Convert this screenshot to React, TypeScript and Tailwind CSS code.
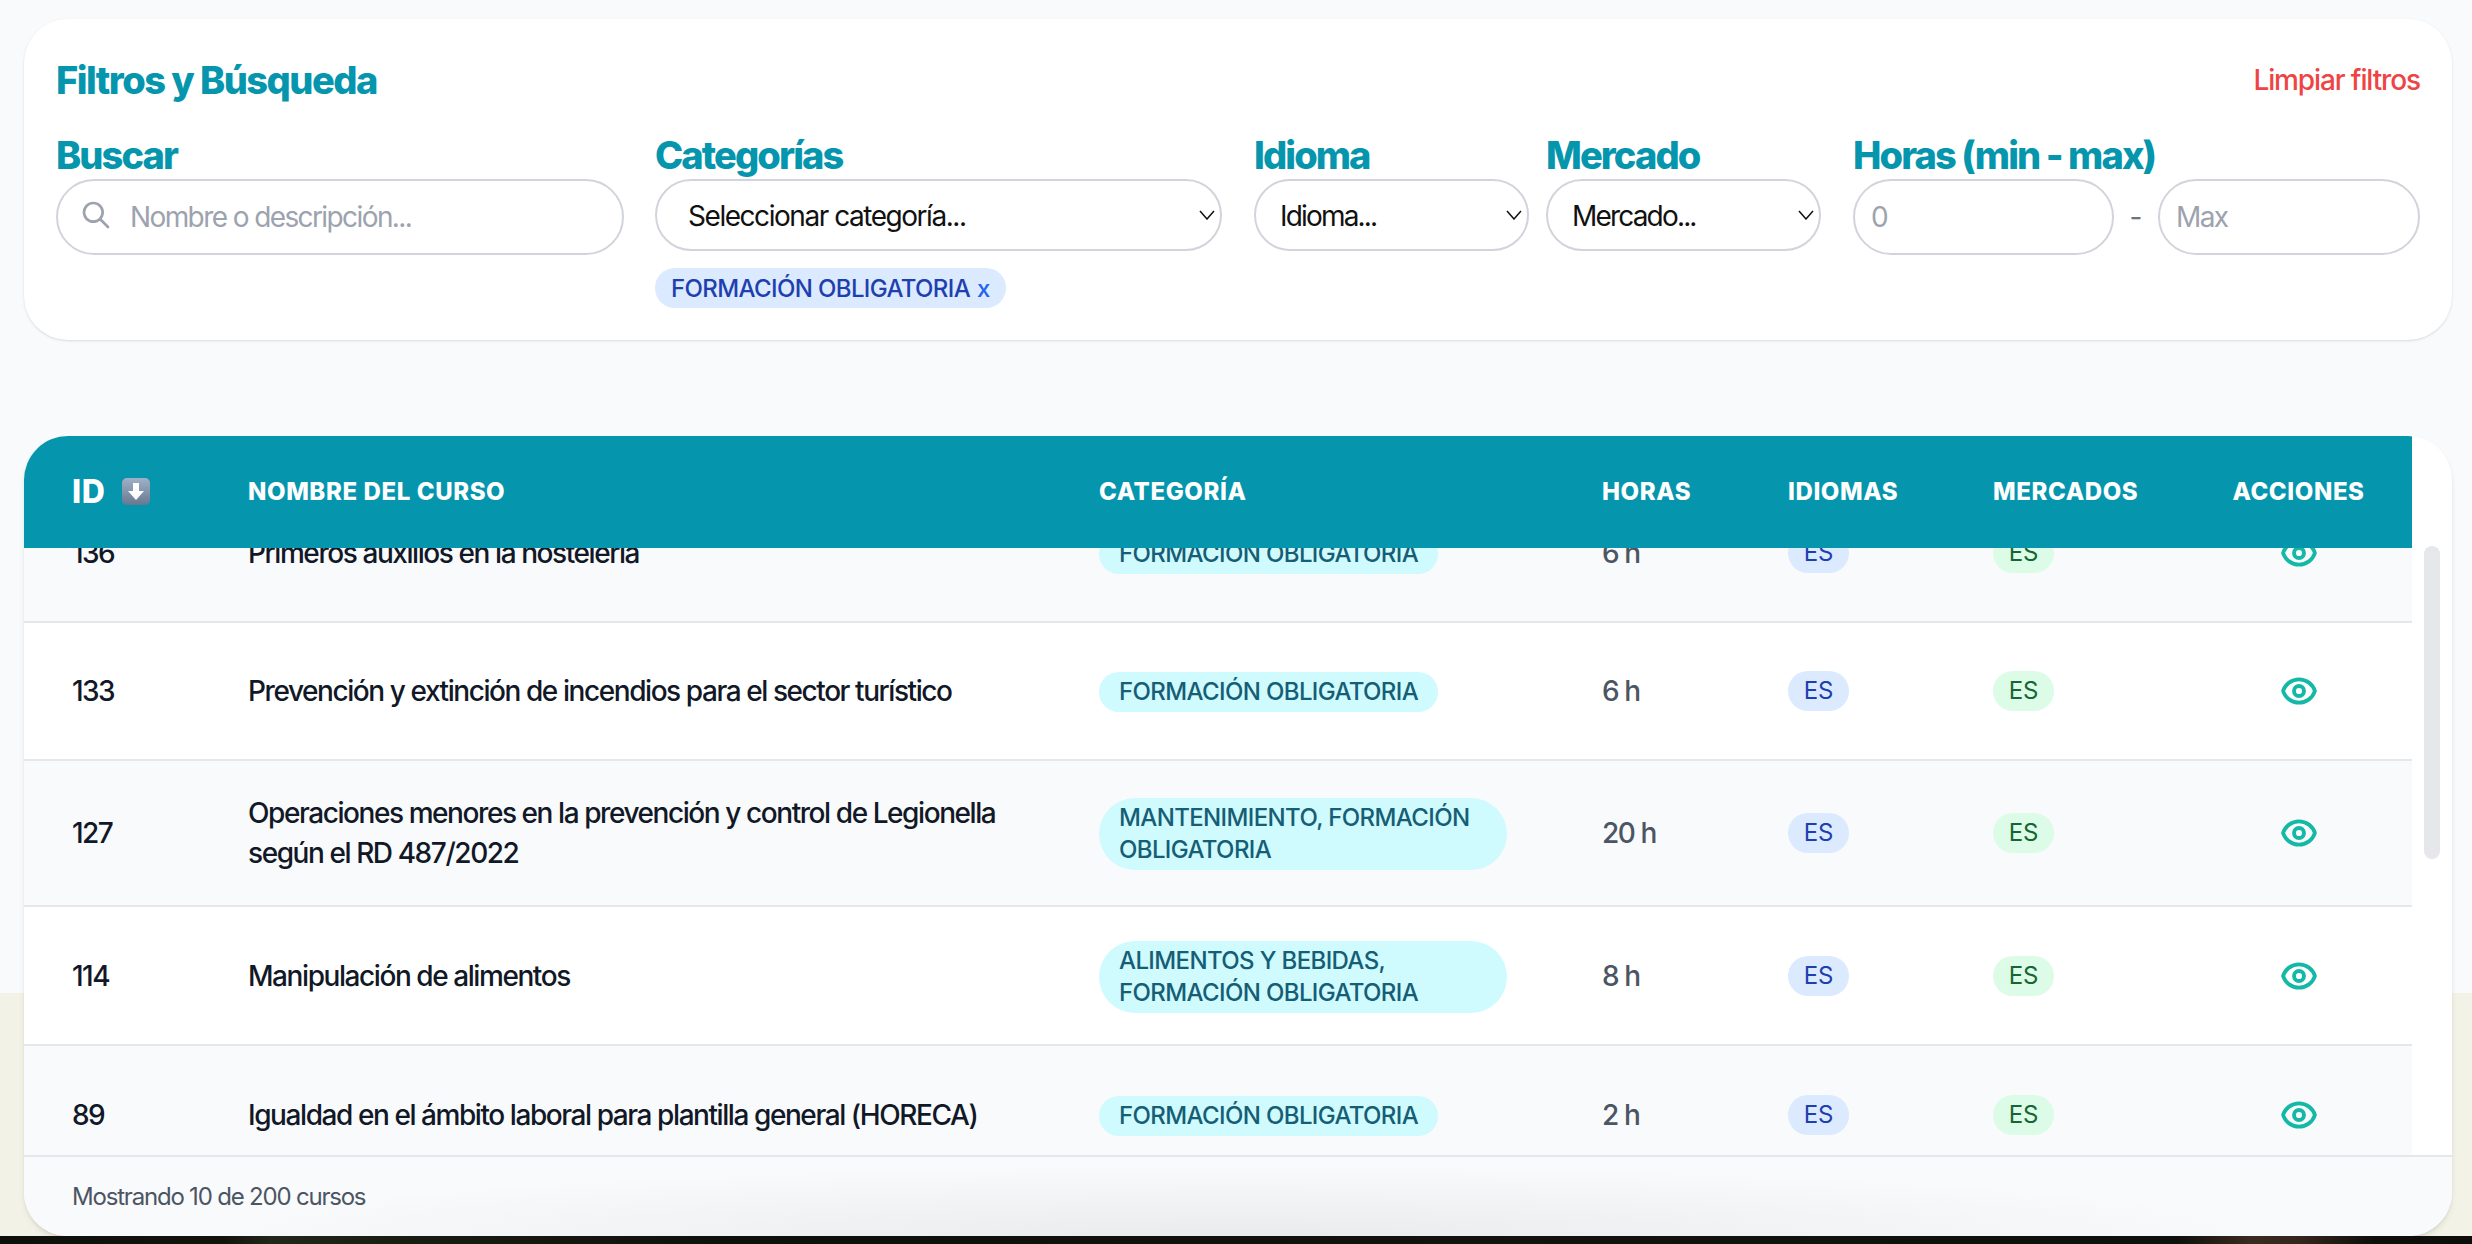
import { ReactNode } from "react";

const gridCols = "grid grid-cols-[176px_851px_503px_186px_205px_240px_227px] items-center";

const courses = [
  { id: 136, name: "Primeros auxilios en la hostelería", cat: "FORMACIÓN OBLIGATORIA", hours: "6 h", rowH: "h-[137px]" },
  { id: 133, name: "Prevención y extinción de incendios para el sector turístico", cat: "FORMACIÓN OBLIGATORIA", hours: "6 h", rowH: "h-[136px]" },
  { id: 127, name: "Operaciones menores en la prevención y control de Legionella según el RD 487/2022", cat: "MANTENIMIENTO, FORMACIÓN OBLIGATORIA", hours: "20 h", rowH: "h-[144px]" },
  { id: 114, name: "Manipulación de alimentos", cat: "ALIMENTOS Y BEBIDAS, FORMACIÓN OBLIGATORIA", hours: "8 h", rowH: "h-[137px]" },
  { id: 89, name: "Igualdad en el ámbito laboral para plantilla general (HORECA)", cat: "FORMACIÓN OBLIGATORIA", hours: "2 h", rowH: "h-[137px]" },
];

const SearchIcon = () => (
  <svg className="w-8 h-8 text-[#9ca3af]" fill="none" viewBox="0 0 24 24" stroke="currentColor" strokeWidth={2}>
    <path strokeLinecap="round" strokeLinejoin="round" d="M21 21l-6-6m2-5a7 7 0 11-14 0 7 7 0 0114 0z" />
  </svg>
);

const EyeIcon = () => (
  <svg className="w-10 h-10 text-[#14b8a6]" fill="none" viewBox="0 0 24 24" stroke="currentColor" strokeWidth={2.3}>
    <path strokeLinecap="round" strokeLinejoin="round" d="M15 12a3 3 0 11-6 0 3 3 0 016 0z" />
    <path
      strokeLinecap="round"
      strokeLinejoin="round"
      d="M2.458 12C3.732 7.943 7.523 5 12 5c4.478 0 8.268 2.943 9.542 7-1.274 4.057-5.064 7-9.542 7-4.477 0-8.268-2.943-9.542-7z"
    />
  </svg>
);

// the emoji arrow next to ID
const SortIcon = () => (
  <svg className="w-[28px] h-[28px]" viewBox="0 0 28 28">
    <defs>
      <linearGradient id="sortBg" x1="0" y1="0" x2="0" y2="1">
        <stop offset="0" stopColor="#9fb0c8" />
        <stop offset="1" stopColor="#67788f" />
      </linearGradient>
    </defs>
    <rect x="0" y="0" width="28" height="27" rx="5" fill="url(#sortBg)" />
    <path d="M11 5h6v8h5l-8 9-8-9h5z" fill="#fff" />
  </svg>
);

const Label = ({ children }: { children: ReactNode }) => (
  <label className="block h-[44px] text-[38px] leading-[40px] font-extrabold text-[#0596ae] tracking-[-0.05em] whitespace-nowrap">
    {children}
  </label>
);

const selectClass =
  "appearance-none h-[72px] w-full bg-white border-2 border-[#d1d5db] rounded-full text-[28px] text-[#111111] pt-[2px] outline-none";

const inputClass =
  "h-[76px] bg-white border-2 border-[#d1d5db] rounded-full text-[28px] tracking-[-0.057em] outline-none placeholder:text-[#9ca3af]";

const Chevron = () => (
  <svg className="absolute right-[7px] top-[31px] w-[16px] h-[10px] text-[#111111]" viewBox="0 0 16 10" fill="none" stroke="currentColor" strokeWidth={1.5}>
    <path d="M1 1l7 8 7-8" />
  </svg>
);

const Badge = ({ className, children }: { className: string; children: ReactNode }) => (
  <span className={`inline-flex items-center justify-center h-[40px] w-[61px] rounded-full text-[24px] tracking-[-0.01em] ${className}`}>
    {children}
  </span>
);

export default function App() {
  return (
    <div className="h-[1244px] overflow-hidden flex flex-col pt-[19px] px-[24px] pr-[20px] font-['Inter',sans-serif] bg-[linear-gradient(to_bottom,#f9fafb_993px,#f2f2e6_993px)]">
      {/* Filtros */}
      <div className="h-[321px] shrink-0 bg-white rounded-[44px] shadow-sm px-[32px] pt-[36px]">
        <div className="flex justify-between items-center h-[50px]">
          <h2 className="text-[38px] font-extrabold text-[#0596ae] tracking-[-0.04em]">Filtros y Búsqueda</h2>
          <button className="text-[28px] font-medium text-[#ef4444] tracking-[-0.04em]">Limpiar filtros</button>
        </div>

        <div className="flex mt-[30px]">
          <div className="w-[599px]">
            <Label>Buscar</Label>
            <div className="relative w-[568px]">
              <span className="absolute left-[24px] top-[20px]">
                <SearchIcon />
              </span>
              <input placeholder="Nombre o descripción..." className={`${inputClass} w-full pl-[72px] pr-[16px]`} />
            </div>
          </div>

          <div className="w-[599px]">
            <Label>Categorías</Label>
            <div className="relative w-[567px]">
              <select className={`${selectClass} pl-[31px] tracking-[-0.052em]`}>
                <option>Seleccionar categoría...</option>
              </select>
              <Chevron />
            </div>
            <div className="mt-[17px]">
              <span className="inline-flex items-center h-[40px] px-[16px] pt-[2px] rounded-full bg-[#dbeafe] text-[#1e40af] text-[24px] tracking-[-0.026em] font-medium">
                FORMACIÓN OBLIGATORIA
                <span className="ml-[7px] text-[#2563eb]">x</span>
              </span>
            </div>
          </div>

          <div className="w-[292px]">
            <Label>Idioma</Label>
            <div className="relative w-[275px]">
              <select className={`${selectClass} pl-[24px] tracking-[-0.065em]`}>
                <option>Idioma...</option>
              </select>
              <Chevron />
            </div>
          </div>

          <div className="w-[307px]">
            <Label>Mercado</Label>
            <div className="relative w-[275px]">
              <select className={`${selectClass} pl-[24px] tracking-[-0.065em]`}>
                <option>Mercado...</option>
              </select>
              <Chevron />
            </div>
          </div>

          <div className="w-[567px]">
            <Label>Horas (min - max)</Label>
            <div className="flex items-center">
              <input placeholder="0" className={`${inputClass} w-[261px] px-[16px]`} />
              <span className="w-[44px] text-center text-[28px] text-[#6b7280]">-</span>
              <input placeholder="Max" className={`${inputClass} w-[262px] px-[16px]`} />
            </div>
          </div>
        </div>
      </div>

      {/* Tabla */}
      <div className="mt-[96px] h-[800px] shrink-0 bg-white rounded-[44px] shadow-md overflow-hidden flex flex-col">
        <div className="flex-1 min-h-0 flex">
          <div className="w-[2388px] flex flex-col">
            <div className={`${gridCols} h-[112px] shrink-0 bg-[#0596ae] text-white font-extrabold text-[24px] tracking-[0.025em] relative z-10`}>
              <div className="pl-[48px] flex items-center gap-[17px] text-[32px]">
                ID
                <SortIcon />
              </div>
              <div className="pl-[48px]">NOMBRE DEL CURSO</div>
              <div className="pl-[48px]">CATEGORÍA</div>
              <div className="pl-[48px]">HORAS</div>
              <div className="pl-[48px]">IDIOMAS</div>
              <div className="pl-[48px]">MERCADOS</div>
              <div className="text-center">ACCIONES</div>
            </div>

            {/* cuerpo desplazado: la primera fila queda cortada bajo la cabecera */}
            <div className="flex-1 min-h-0 overflow-hidden">
              <div className="-mt-[64px]">
                {courses.map((c, i) => (
                  <div
                    key={c.id}
                    className={`${gridCols} ${c.rowH} box-content border-b-2 border-[#e5e7eb] ${i % 2 === 0 ? "bg-[#f9fafb]" : "bg-white"}`}
                  >
                    <div className="pl-[48px] text-[28px] font-medium text-[#111827] tracking-[-0.055em]">{c.id}</div>
                    <div className="pl-[48px] pr-[48px] text-[28px] leading-[40px] font-medium text-[#111827] tracking-[-0.051em]">
                      {c.name}
                    </div>
                    <div className="pl-[48px] pt-[2px] flex items-center">
                      <span className="max-w-[408px] px-[20px] py-[4px] rounded-[36px] bg-[#cffafe] text-[#155e75] text-[24px] leading-[32px] font-medium tracking-[-0.026em]">
                        {c.cat}
                      </span>
                    </div>
                    <div className="pl-[48px] text-[28px] text-[#4b5563] font-medium tracking-[-0.05em]">{c.hours}</div>
                    <div className="pl-[48px] flex items-center">
                      <Badge className="bg-[#dbeafe] text-[#1e40af]">ES</Badge>
                    </div>
                    <div className="pl-[48px] flex items-center">
                      <Badge className="bg-[#dcfce7] text-[#166534]">ES</Badge>
                    </div>
                    <div className="flex justify-center">
                      <EyeIcon />
                    </div>
                  </div>
                ))}
              </div>
            </div>
          </div>

          {/* scrollbar */}
          <div className="w-[40px] pl-[12px] pt-[110px]">
            <div className="w-[16px] h-[313px] rounded-full bg-[#e5e7eb]" />
          </div>
        </div>

        <div className="h-[81px] shrink-0 border-t-2 border-[#e5e7eb] flex items-center pl-[48px] text-[24px] text-[#4b5563] tracking-[-0.05em] bg-[#f9fafb] bg-[radial-gradient(ellipse_1050px_70px_at_50%_100%,#e9ebed,#f9fafb)]">
          Mostrando 10 de 200 cursos
        </div>
      </div>

      {/* borde de la foto de fondo */}
      <div className="h-[8px] shrink-0 -ml-[24px] -mr-[20px] bg-[linear-gradient(to_right,#0d0f0a_0%,#12140c_9%,#23261a_11%,#1a1d12_16%,#0e100b_30%,#12130e_60%,#0d100c_88%,#3a2a20_91%,#35261d_93%,#0e0f0b_96%,#0d0e0a_100%)]" />
    </div>
  );
}
